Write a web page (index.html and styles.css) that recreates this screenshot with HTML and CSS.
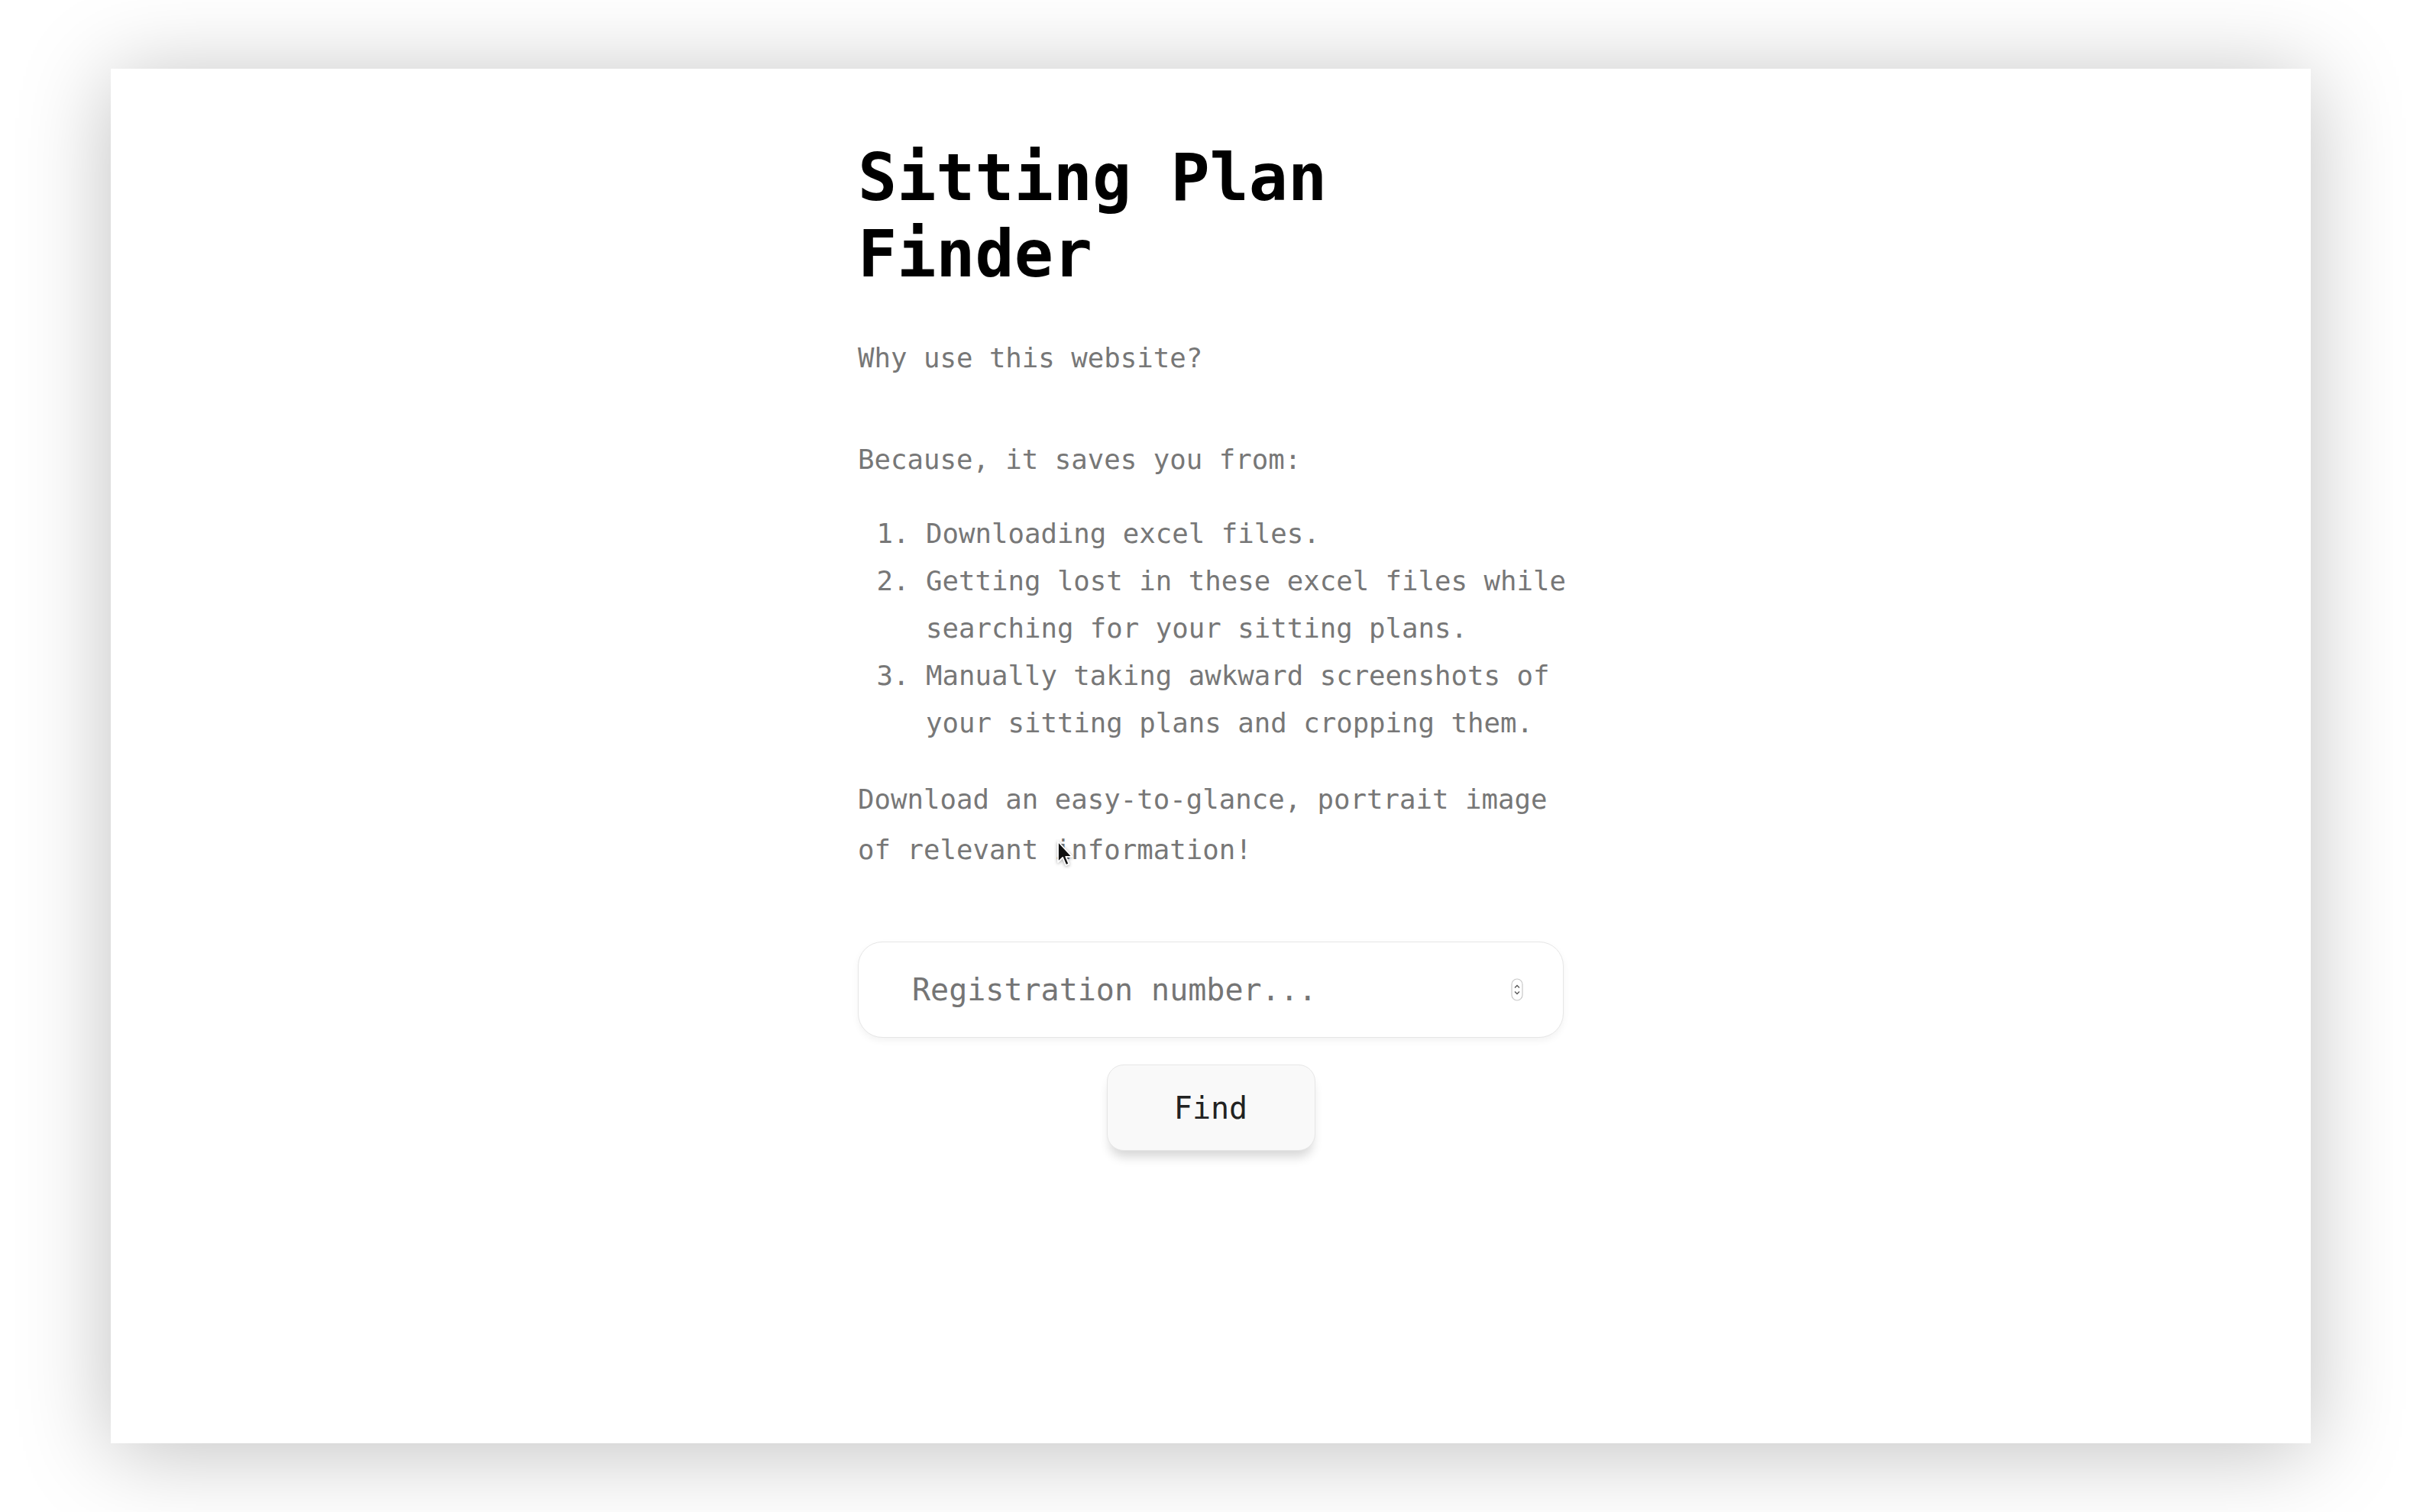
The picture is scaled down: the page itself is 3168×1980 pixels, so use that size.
FILE: index.html
```html
<!DOCTYPE html>
<html lang="en">
<head>
<meta charset="utf-8">
<title>Sitting Plan Finder</title>
<link rel="stylesheet" href="styles.css">
</head>
<body>
<main class="card">
  <section class="column">
    <h1 class="title">Sitting Plan Finder</h1>
    <p class="why">Why use this website?</p>
    <p class="because">Because, it saves you from:</p>
    <ol class="reasons">
      <li>Downloading excel files.</li>
      <li>Getting lost in these excel files while searching for your sitting plans.</li>
      <li>Manually taking awkward screenshots of your sitting plans and cropping them.</li>
    </ol>
    <p class="download">Download an easy-to-glance, portrait image of relevant information!</p>
    <form class="finder">
      <div class="field">
        <input class="reg" type="text" placeholder="Registration number...">
        <svg class="spin" width="16" height="30" viewBox="0 0 16 30">
          <rect x="1" y="1" width="14" height="28" rx="7" fill="#fff" stroke="#c8c8c8" stroke-width="1.2"/>
          <path d="M5 12.5 L8 9.5 L11 12.5" fill="none" stroke="#555" stroke-width="1.3"/>
          <path d="M5 17.5 L8 20.5 L11 17.5" fill="none" stroke="#555" stroke-width="1.3"/>
        </svg>
      </div>
      <button class="find" type="button">Find</button>
    </form>
  </section>
  <svg class="cursor" width="22" height="38" viewBox="0 0 22 38">
    <path d="M2 2 L2 29 L8.2 23 L12.4 33 L16.4 31.3 L12.3 21.8 L20.5 21.8 Z" fill="#111" stroke="#fff" stroke-width="1.8" stroke-linejoin="round"/>
  </svg>
</main>
</body>
</html>
```

FILE: styles.css
```css
html, body {
  margin: 0;
  padding: 0;
  background: #ffffff;
}

body {
  padding: 90px 143px 90px 145px;
  font-family: "DejaVu Sans Mono", "Liberation Mono", monospace;
}

.card {
  position: relative;
  width: 2880px;
  height: 1800px;
  background: #ffffff;
  box-shadow: 0 10px 110px rgba(0, 0, 0, 0.25);
  display: flex;
  justify-content: center;
  box-sizing: border-box;
  padding-top: 93px;
}

.column {
  width: 924px;
  display: flex;
  flex-direction: column;
}

.title {
  margin: 0;
  font-size: 85px;
  line-height: 100px;
  font-weight: bold;
  color: #000;
  letter-spacing: 0;
}

.why, .because, .download, .reasons {
  font-size: 35.7px;
  color: #777777;
}

.why {
  margin: 54px 0 69px;
  line-height: 64px;
}

.because {
  margin: 0;
  line-height: 64px;
}

.reasons {
  margin: 34px -14px 0 0;
  padding-left: 89px;
  line-height: 62px;
}

.download {
  margin: 36px 0 0;
  line-height: 66px;
}

.finder {
  margin: 87px 0 0;
  display: flex;
  flex-direction: column;
  align-items: center;
  gap: 35px;
}

.field {
  width: 924px;
  height: 126px;
  box-sizing: border-box;
  border: 1.5px solid #e6e6e6;
  border-radius: 32px;
  background: #fff;
  box-shadow: 0 4px 10px rgba(0, 0, 0, 0.05);
  display: flex;
  align-items: center;
  padding: 0 52px 0 70px;
}

.reg {
  flex: 1;
  min-width: 0;
  border: none;
  outline: none;
  background: transparent;
  padding: 0;
  font-family: "DejaVu Sans Mono", "Liberation Mono", monospace;
  font-size: 40px;
  color: #333;
}

.reg::placeholder {
  color: #757575;
}

.spin {
  display: block;
  flex: none;
}

.find {
  width: 273px;
  height: 113px;
  box-sizing: border-box;
  border: 1.5px solid #e6e6e6;
  border-radius: 22px;
  background: #f9f9f9;
  box-shadow: 0 12px 14px -4px rgba(0, 0, 0, 0.16);
  font-family: "DejaVu Sans Mono", "Liberation Mono", monospace;
  font-size: 40px;
  color: #222;
  padding: 0;
}

.cursor {
  position: absolute;
  left: 1238px;
  top: 1010px;
  filter: drop-shadow(0 1px 2px rgba(0, 0, 0, 0.35));
}
```
